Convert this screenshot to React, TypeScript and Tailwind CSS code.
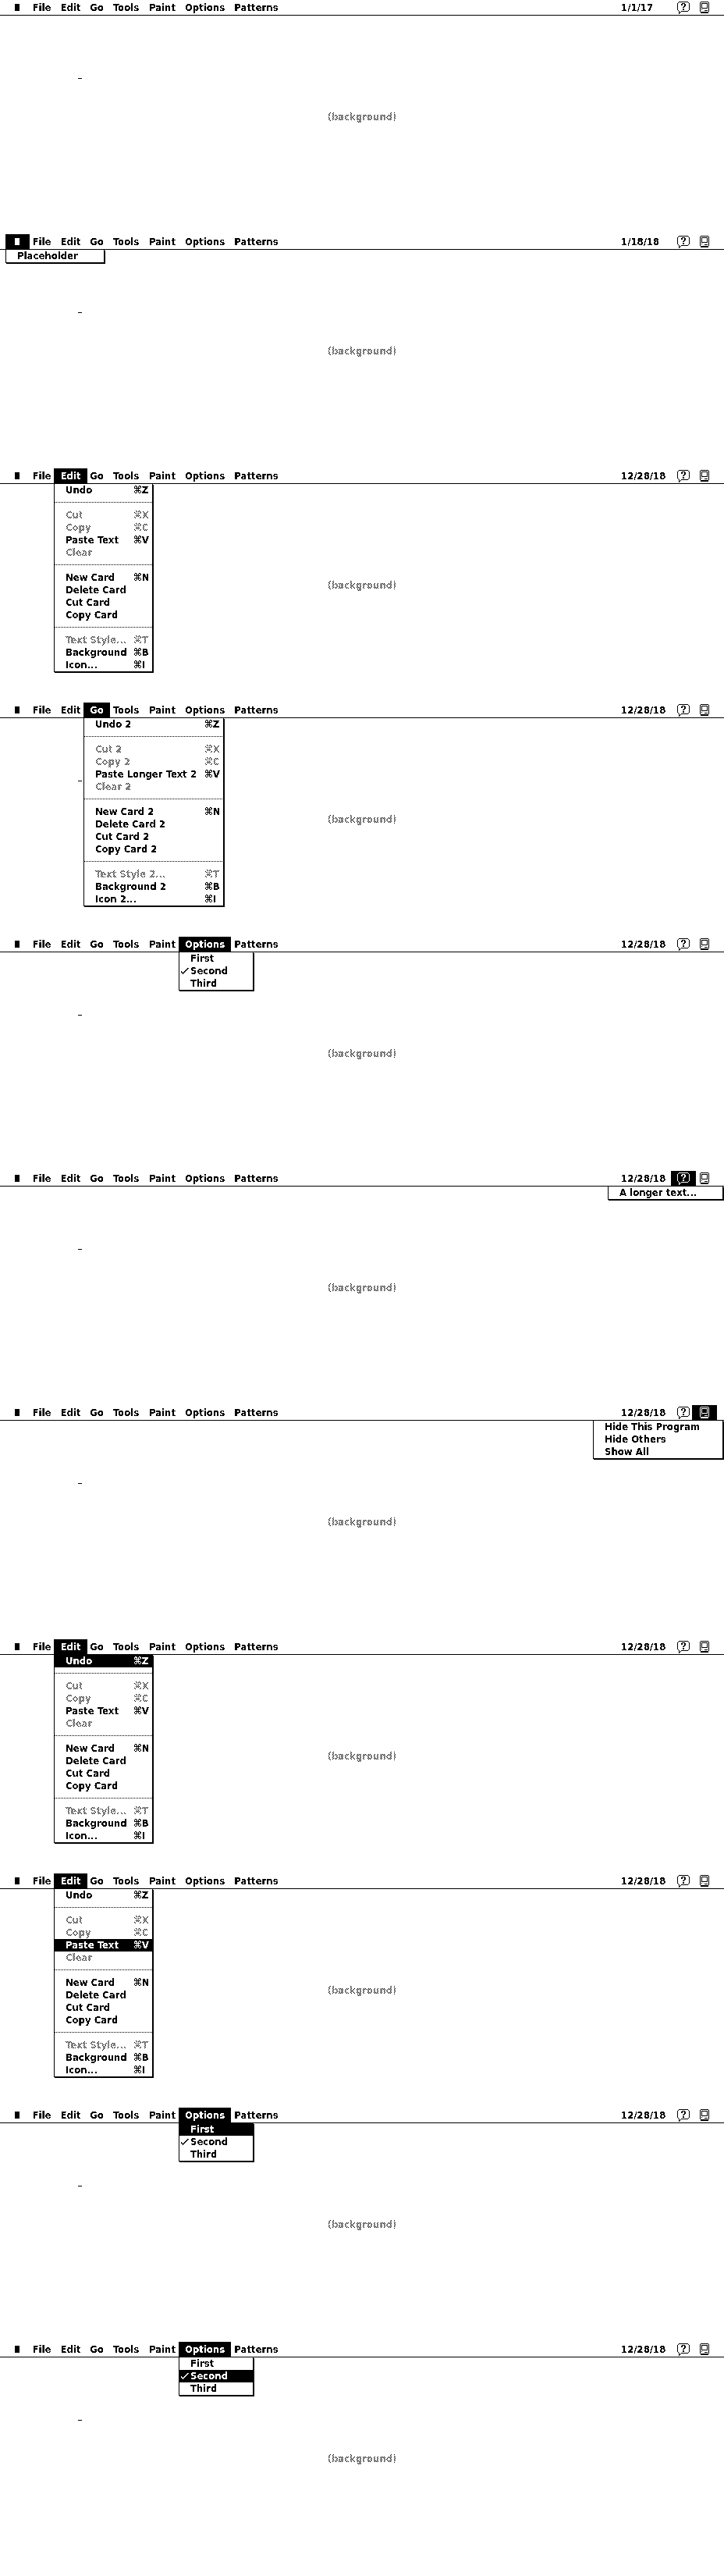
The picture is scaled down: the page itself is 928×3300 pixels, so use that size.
import React from "react";

type Entry = { label: string; keys?: string; off?: boolean; checked?: boolean } | null;
type Scene = { date: string; open?: string; active?: string };

const titles = [
  { name: "Apple", width: "w-[31px]" },
  { name: "File", width: "w-[41px]" },
  { name: "Edit", width: "w-[43px]" },
  { name: "Go", width: "w-[34px]" },
  { name: "Tools", width: "w-[51px]" },
  { name: "Paint", width: "w-[52px]" },
  { name: "Options", width: "w-[67px]" },
  { name: "Patterns", width: "w-[75px]" },
];

const editEntries: Entry[] = [
  { label: "Undo", keys: "⌘Z" },
  null,
  { label: "Cut", keys: "⌘X", off: true },
  { label: "Copy", keys: "⌘C", off: true },
  { label: "Paste Text", keys: "⌘V" },
  { label: "Clear", off: true },
  null,
  { label: "New Card", keys: "⌘N" },
  { label: "Delete Card" },
  { label: "Cut Card" },
  { label: "Copy Card" },
  null,
  { label: "Text Style...", keys: "⌘T", off: true },
  { label: "Background", keys: "⌘B" },
  { label: "Icon...", keys: "⌘I" },
];

const goEntries: Entry[] = [
  { label: "Undo 2", keys: "⌘Z" },
  null,
  { label: "Cut 2", keys: "⌘X", off: true },
  { label: "Copy 2", keys: "⌘C", off: true },
  { label: "Paste Longer Text 2", keys: "⌘V" },
  { label: "Clear 2", off: true },
  null,
  { label: "New Card 2", keys: "⌘N" },
  { label: "Delete Card 2" },
  { label: "Cut Card 2" },
  { label: "Copy Card 2" },
  null,
  { label: "Text Style 2...", keys: "⌘T", off: true },
  { label: "Background 2", keys: "⌘B" },
  { label: "Icon 2...", keys: "⌘I" },
];

const menus: Record<string, { place: string; entries: Entry[] }> = {
  Apple: { place: "left-0 w-[127px]", entries: [{ label: "Placeholder" }] },
  Edit: { place: "left-0 w-[127px]", entries: editEntries },
  Go: { place: "left-0 w-[180px]", entries: goEntries },
  Options: {
    place: "left-0 w-[96px]",
    entries: [{ label: "First" }, { label: "Second", checked: true }, { label: "Third" }],
  },
  Help: { place: "-right-[35px] w-[148px]", entries: [{ label: "A longer text..." }] },
  Programs: {
    place: "-right-2 w-[167px]",
    entries: [{ label: "Hide This Program" }, { label: "Hide Others" }, { label: "Show All" }],
  },
};

const scenes: Scene[] = [
  { date: "1/1/17" },
  { date: "1/18/18", open: "Apple" },
  { date: "12/28/18", open: "Edit" },
  { date: "12/28/18", open: "Go" },
  { date: "12/28/18", open: "Options" },
  { date: "12/28/18", open: "Help" },
  { date: "12/28/18", open: "Programs" },
  { date: "12/28/18", open: "Edit", active: "Undo" },
  { date: "12/28/18", open: "Edit", active: "Paste Text" },
  { date: "12/28/18", open: "Options", active: "First" },
  { date: "12/28/18", open: "Options", active: "Second" },
];

const dither =
  "bg-[repeating-conic-gradient(#000_0_25%,#fff_0_50%)] bg-[length:2px_2px] bg-clip-text text-transparent";

function Check() {
  return (
    <svg aria-hidden="true" width="10" height="8" viewBox="0 0 10 8" fill="currentColor" shapeRendering="crispEdges">
      <path d="M8 0h2v1h-2zM7 1h2v1h-2zM6 2h2v1h-2zM5 3h2v1h-2zM0 4h1v1h-1zM4 4h2v1h-2zM0 5h2v1h-2zM3 5h2v1h-2zM1 6h3v1h-3zM2 7h1v1h-1z" />
    </svg>
  );
}

function HelpIcon() {
  return (
    <svg
      aria-hidden="true"
      className="mt-px"
      width="16"
      height="16"
      viewBox="0 0 16 16"
      fill="currentColor"
      shapeRendering="crispEdges"
    >
      <path d="M2 0h12v1h-12zM1 1h1v1h-1zM14 1h1v1h-1zM0 2h1v9h-1zM15 2h1v9h-1zM1 11h1v1h-1zM14 11h1v1h-1zM5 12h9v1h-9zM2 12h1v4h-1zM4 13h1v1h-1zM3 14h1v1h-1z" />
      <path d="M6 2h4v1h-4zM5 3h2v2h-2zM9 3h2v3h-2zM8 6h2v1h-2zM7 7h2v1h-2zM7 9h2v2h-2z" />
    </svg>
  );
}

function ProgramsIcon() {
  return (
    <svg aria-hidden="true" width="12" height="15" viewBox="0 0 12 15" fill="currentColor" shapeRendering="crispEdges">
      <path d="M1 0h10v1h-10zM0 1h1v12h-1zM11 1h1v12h-1zM1 13h10v2h-10zM2 2h8v1h-8zM2 3h1v5h-1zM9 3h1v5h-1zM2 8h8v1h-8zM2 10h1v1h-1zM6 11h4v1h-4z" />
    </svg>
  );
}

function Dropdown({ name, active }: { name: string; active?: string }) {
  const { place, entries } = menus[name];
  return (
    <ul className={`absolute top-5 z-10 border border-t-0 border-black bg-white text-black shadow-[1px_1px_0_#000] ${place}`}>
      {entries.map((entry, i) =>
        entry ? (
          <li key={i}>
            <button
              type="button"
              disabled={entry.off}
              className={`relative flex h-4 w-full items-center pl-3.5 text-left leading-4 ${
                entry.label === active ? "bg-black text-white" : ""
              }`}
            >
              {entry.checked && (
                <span className="absolute left-0.5">
                  <Check />
                </span>
              )}
              <span className={`grow whitespace-nowrap ${entry.off ? dither : ""}`}>{entry.label}</span>
              {entry.keys && (
                <span className={`w-6 shrink-0 whitespace-nowrap ${entry.off ? dither : ""}`}>{entry.keys}</span>
              )}
            </button>
          </li>
        ) : (
          <li key={i} role="separator" className="h-4 pt-[7px]">
            <div className="h-px bg-[repeating-linear-gradient(90deg,#000_0_1px,#fff_1px_2px)]" />
          </li>
        ),
      )}
    </ul>
  );
}

function Title({ name, width, scene, children }: { name: string; width: string; scene: Scene; children: React.ReactNode }) {
  const open = scene.open === name;
  return (
    <div className={`relative -mr-[5px] h-5 ${width} ${open ? "z-10" : ""}`}>
      <button
        type="button"
        aria-label={name}
        aria-expanded={open}
        className={`flex h-[19px] w-full items-center justify-center whitespace-nowrap ${open ? "bg-black text-white" : ""}`}
      >
        {children}
      </button>
      {open && <Dropdown name={name} active={scene.active} />}
    </div>
  );
}

function Desktop({ scene }: { scene: Scene }) {
  return (
    <section className="relative flex h-[300px] flex-col">
      <nav className="flex h-5 justify-between border-b border-black pl-[7px] pr-3.5">
        <div className="flex">
          {titles.map(({ name, width }) => (
            <Title key={name} name={name} width={width} scene={scene}>
              {name === "Apple" ? <span className="mr-px h-[9px] w-1.5 bg-current" /> : name}
            </Title>
          ))}
        </div>
        <div className="flex">
          <time className="mr-1 w-[60px] leading-[19px] whitespace-nowrap">{scene.date}</time>
          <Title name="Help" width="w-8" scene={scene}>
            <HelpIcon />
          </Title>
          <Title name="Programs" width="w-8" scene={scene}>
            <ProgramsIcon />
          </Title>
        </div>
      </nav>
      <div className="absolute left-[100px] top-[100px] h-px w-[5px] bg-black" />
      <main className="-mt-5 flex grow items-center justify-center">
        <p className={`leading-4 ${dither}`}>(background)</p>
      </main>
    </section>
  );
}

export default function App() {
  return (
    <div className="bg-white font-['DejaVu_Sans_Condensed','DejaVu_Sans',sans-serif] text-[13px] font-bold text-black contrast-[50]">
      {scenes.map((scene, i) => (
        <Desktop key={i} scene={scene} />
      ))}
    </div>
  );
}
